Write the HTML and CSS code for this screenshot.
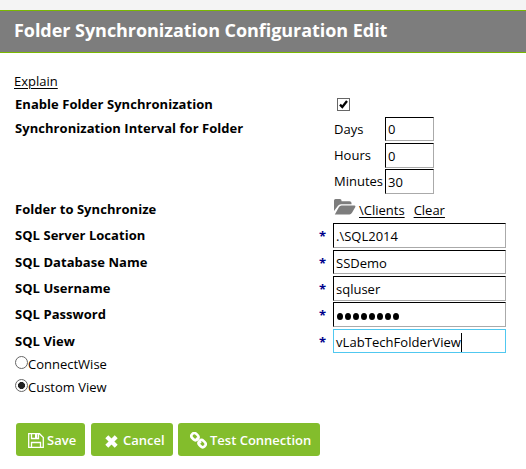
FILE: index.html
```html
<!DOCTYPE html>
<html lang="en">
<head>
<meta charset="utf-8">
<title>Folder Synchronization Configuration Edit</title>
<link rel="stylesheet" href="styles.css">
</head>
<body>
<header class="title-bar"><h1>Folder Synchronization Configuration Edit</h1></header>
<main>
  <div class="explain"><a>Explain</a></div>
  <div class="row row-enable">
    <span class="label">Enable Folder Synchronization</span>
    <span class="checkbox"><svg width="11" height="11" viewBox="0 0 11 11"><path d="M2 5.6 4.3 8 9 2" fill="none" stroke="#000" stroke-width="2.3"/></svg></span>
  </div>
  <div class="row row-interval">
    <span class="label">Synchronization Interval for Folder</span>
    <div class="interval">
      <div class="unit"><span>Days</span><div class="field">0</div></div>
      <div class="unit"><span>Hours</span><div class="field">0</div></div>
      <div class="unit"><span>Minutes</span><div class="field">30</div></div>
    </div>
  </div>
  <div class="row row-folder">
    <span class="label">Folder to Synchronize</span>
    <svg class="folder" width="22" height="16" viewBox="0 0 22 16"><path d="M0 12V1.500Q0 0 1.500 0H6Q7.500 0 7.500 1.500V2.300H15.500Q17.500 2.300 17.500 4V5.300H7Q5 5.300 4 6.800Z M.8 15.500 5 8Q5.800 6.500 7.500 6.500H20.500Q22 6.500 21.300 8L18 13.700Q17 15.500 15.500 15.500Z" fill="#7d7d7d"/></svg>
    <a class="path">\Clients</a><a>Clear</a>
  </div>
  <div class="row sql"><span class="label">SQL Server Location</span><span class="star">*</span><div class="field">.\SQL2014</div></div>
  <div class="row sql"><span class="label">SQL Database Name</span><span class="star">*</span><div class="field">SSDemo</div></div>
  <div class="row sql"><span class="label">SQL Username</span><span class="star">*</span><div class="field">sqluser</div></div>
  <div class="row sql"><span class="label">SQL Password</span><span class="star">*</span><div class="field password"><i></i><i></i><i></i><i></i><i></i><i></i><i></i><i></i></div></div>
  <div class="row sql"><span class="label">SQL View</span><span class="star">*</span><div class="field focused">vLabTechFolderView<span class="caret"></span></div></div>
  <div class="option"><span class="radio"></span><span>ConnectWise</span></div>
  <div class="option"><span class="radio checked"></span><span>Custom View</span></div>
  <div class="buttons">
    <div class="button save"><svg width="16" height="15" viewBox="0 0 16 15" fill="none" stroke="#fff" stroke-width="1.300"><path d="M.7.7H11.500L15.300 4.500V14.300H.7Z M3.500.7V5.500H10.500V.7 M3.500 14V9.500H12.500V14"/><path d="M7 1H9.300V5H7Z" fill="#fff" stroke="none"/></svg><span>Save</span></div>
    <div class="button cancel"><svg width="13" height="13" viewBox="0 0 13 13"><path d="M1.800 1.800 11.200 11.200M11.200 1.800 1.800 11.200" stroke="#fff" stroke-width="4.200"/></svg><span>Cancel</span></div>
    <div class="button test"><svg width="17" height="17" viewBox="0 0 17 17" fill="none" stroke="#fff" stroke-width="2.600"><rect x="1.200" y="1.700" width="7.400" height="5.800" rx="2.800" transform="rotate(45 4.900 4.600)"/><rect x="8.400" y="8.700" width="7.400" height="5.800" rx="2.800" transform="rotate(45 12.100 11.600)"/><path d="M6 6 8 8M9 9 11 11" stroke-width="2"/></svg><span>Test Connection</span></div>
  </div>
</main>
</body>
</html>
```
FILE: styles.css
```css
* { box-sizing: border-box; }
body {
  margin: 0;
  padding-top: 10px;
  background: #fff linear-gradient(#f4f4f4, #f4f4f4) 0 0 / 100% 10px no-repeat;
  color: #000;
  font: 13px/18px "Open Sans", sans-serif;
}
.title-bar {
  height: 43px;
  padding-left: 14px;
  background: #7d7d7d;
  border-top: 1px solid #7ab800;
  border-bottom: 1px solid #7ab800;
}
h1 {
  margin: 0;
  color: #fff;
  font-size: 18px;
  line-height: 38px;
  font-weight: 700;
  letter-spacing: -0.05px;
  white-space: nowrap;
}
main { padding: 19px 0 0 15px; }
a { text-decoration: underline; text-underline-offset: 2px; }
.explain { height: 22.6px; margin-left: -1px; }
.row { display: flex; white-space: nowrap; }
.label {
  width: 304px;
  flex: none;
  font-weight: 700;
  letter-spacing: 0.05px;
}
.row-enable { height: 22px; }
.checkbox {
  width: 13px;
  height: 13px;
  margin: 3.4px 0 0 18px;
  border: 1px solid #666;
}
.checkbox svg { display: block; }
.row-interval { height: 83.2px; }
.row-interval .label { padding-top: 2px; }
.interval { margin-left: 15px; }
.unit { display: flex; height: 26.4px; }
.unit > span { width: 51px; padding-top: 3px; }
.unit:first-child .field { padding-top: 2px; }
.field {
  width: 173px;
  height: 24.6px;
  padding: 3px 2px 0;
  border: 1px solid;
  border-color: #000 #aaa #aaa #000;
  background: #fff;
}
.unit .field { width: 49px; }
.row-folder { height: 23.4px; }
.folder { margin: -0.8px 3px 0 15px; flex: none; }
.row-folder .path { margin-right: 9px; }
.row-folder a { padding-top: 1px; }
.sql { height: 26.4px; }
.sql .label { padding-top: 3px; }
.star {
  width: 14px;
  padding-top: 4px;
  color: #00008b;
  font-weight: 700;
}
.password { display: flex; gap: 2px; padding: 10px 3px 0; }
.password i {
  width: 6px;
  height: 7px;
  border-radius: 50%;
  background: #000;
}
.focused { display: flex; border-color: #50c8f0; letter-spacing: 0.06px; }
.caret { width: 1px; height: 19px; background: #000; }
.option { display: flex; height: 23px; }
.option + .option { margin-top: -0.6px; }
.radio {
  width: 13px;
  height: 13px;
  margin-top: 1px;
  border: 1px solid #666;
  border-radius: 50%;
  background: #fff;
}
.checked { background: radial-gradient(circle, #222 3.2px, #fff 3.8px); }
.buttons { display: flex; margin: 22.4px 0 0 1px; }
.button {
  display: flex;
  align-items: center;
  height: 33px;
  border-radius: 3px;
  background: #83bd2c;
  color: #fff;
  font-weight: 600;
  white-space: nowrap;
}
.button svg { flex: none; margin-top: 2px; }
.button span { padding-top: 1px; }
.save { width: 69px; margin-right: 6px; padding-left: 12px; gap: 3px; }
.cancel { width: 82px; margin-right: 5px; padding-left: 14px; gap: 5px; }
.cancel svg { margin-top: 4px; }
.test { width: 142px; padding-left: 12px; gap: 3px; }
```
